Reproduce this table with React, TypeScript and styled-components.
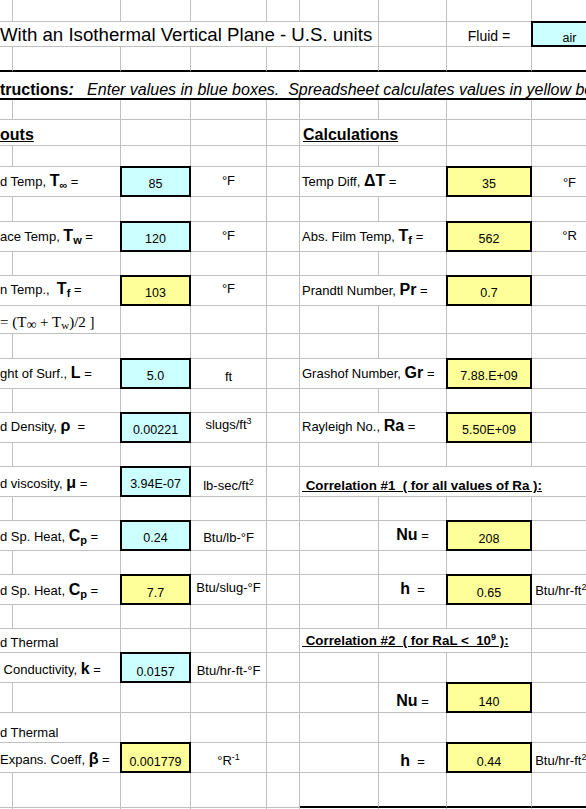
import React from 'react'
import styled, { createGlobalStyle } from 'styled-components'

const GRID = '#c0c0c0'
const colWidths = [13, 108, 70, 76, 33, 79, 68, 85, 76]

type Edge = 'grid' | 'rule'

const GlobalStyle = createGlobalStyle`
    *, *::before, *::after {
        box-sizing: border-box;
    }
    html, body {
        margin: 0;
        padding: 0;
        background: #ffffff;
    }
    body {
        font-family: 'Liberation Sans', Arial, sans-serif;
        color: #000000;
    }
`

const Sheet = styled.div`
    width: 586px;
    height: 809px;
    overflow: hidden;
    display: flex;
    flex-direction: column;
`

const Row = styled.div<{ $h: number }>`
    display: grid;
    grid-template-columns: ${colWidths.map((w) => `${w}px`).join(' ')};
    grid-auto-rows: 100%;
    height: ${(p) => p.$h}px;
    flex: none;
`

const Cell = styled.div<{ $span?: number; $bottom?: Edge; $pb?: number; $pl?: number }>`
    grid-column: span ${(p) => p.$span ?? 1};
    display: flex;
    align-items: flex-end;
    justify-content: flex-start;
    min-width: 0;
    white-space: pre;
    padding: 0 0 ${(p) => p.$pb ?? 0}px ${(p) => p.$pl ?? 0}px;
    border-right: 1px solid ${GRID};
    border-bottom: ${(p) => (p.$bottom === 'rule' ? '2px solid #000' : `1px solid ${GRID}`)};
    font-size: 13px;
    line-height: 18px;
`

/* keeps mixed runs (symbols, sub/superscripts) on one line box */
const Txt = styled.span`
    display: block;
`

const Title = styled(Cell)`
    font-size: 18.67px;
    line-height: 22px;
`

const FluidLabel = styled(Cell)`
    justify-content: center;
    font-size: 14px;
    padding-bottom: 1px;
`

const Instructions = styled(Cell)`
    border-right: none;
    font-size: 16px;
    line-height: 16px;

    b {
        font-weight: 700;
    }
    i {
        font-style: italic;
    }
`

const SectionHead = styled(Cell)`
    font-size: 16px;
    line-height: 16px;
    font-weight: 700;
    text-decoration: underline;
    padding-bottom: 2.5px;
`

const Label = styled(Cell)`
    padding-bottom: ${(p) => p.$pb ?? 5}px;
`

const Formula = styled(Cell)`
    font-family: 'Liberation Serif', 'Times New Roman', serif;
    font-size: 15px;
    padding-bottom: 2px;
`

const ValueBox = styled(Cell)<{ $tone: 'cyan' | 'yellow' }>`
    margin: -1px 0 0 -1px;
    border: 2px solid #000;
    background: ${(p) => (p.$tone === 'cyan' ? '#ccffff' : '#ffff99')};
    justify-content: center;
    font-size: 12.5px;
    line-height: 14px;
    padding-bottom: ${(p) => p.$pb ?? 4}px;
`

const Unit = styled(Cell)`
    justify-content: center;
    padding-bottom: ${(p) => p.$pb ?? 5}px;
`

const CorrHead = styled(Cell)`
    font-size: 13.33px;
    font-weight: 700;
    text-decoration: underline;
    padding-left: 2px;
    padding-bottom: ${(p) => p.$pb ?? 1}px;
`

const Result = styled(Cell)`
    justify-content: center;
    padding-bottom: ${(p) => p.$pb ?? 5}px;
`

const Sym = styled.b`
    font-size: 16px;
    line-height: 1;
    font-weight: 700;
`

const Sub = styled.sub`
    font-size: 11px;
    line-height: 0;
    vertical-align: -3px;
`

const Sup = styled.sup`
    font-size: 9px;
    line-height: 0;
    vertical-align: 5px;
`

const SerifSub = styled.sub<{ $size?: number }>`
    font-size: ${(p) => p.$size ?? 11}px;
    line-height: 0;
    vertical-align: -2px;
`

const Blanks = ({ n }: { n: number }) => (
    <>
        {Array.from({ length: n }).map((_, i) => (
            <Cell key={i} />
        ))}
    </>
)

const BlankRow = ({ h, bottom, ruleFrom }: { h: number; bottom?: Edge; ruleFrom?: number }) => (
    <Row $h={h}>
        {colWidths.map((_, i) => (
            <Cell key={i} $bottom={ruleFrom !== undefined && i >= ruleFrom ? 'rule' : bottom} />
        ))}
    </Row>
)

const App = () => {
    return (
        <>
            <GlobalStyle />
            <Sheet>
                <BlankRow h={22} />
                <Row $h={25}>
                    <Title $span={6}>With an Isothermal Vertical Plane - U.S. units</Title>
                    <Cell />
                    <FluidLabel>Fluid =</FluidLabel>
                    <ValueBox $tone="cyan" $pb={0}>air</ValueBox>
                </Row>
                <BlankRow h={25} bottom="rule" />
                <Row $h={28}>
                    <Instructions $span={9} $bottom="rule">
                        <Txt>
                            <b>tructions<i>:</i></b>
                            <i>{'   Enter values in blue boxes.  Spreadsheet calculates values in yellow boxes.'}</i>
                        </Txt>
                    </Instructions>
                </Row>
                <BlankRow h={20} />
                <Row $h={26}>
                    <SectionHead $span={2}>outs</SectionHead>
                    <Blanks n={3} />
                    <SectionHead $span={2} $pl={3}>Calculations</SectionHead>
                    <Blanks n={2} />
                </Row>
                <BlankRow h={21} />

                <Row $h={30}>
                    <Label $span={2}><Txt>d Temp, <Sym>T<Sub>∞</Sub></Sym> =</Txt></Label>
                    <ValueBox $tone="cyan">85</ValueBox>
                    <Unit $pb={6.5}>°F</Unit>
                    <Cell />
                    <Label $span={2} $pl={2}><Txt>Temp Diff, <Sym>ΔT</Sym> =</Txt></Label>
                    <ValueBox $tone="yellow">35</ValueBox>
                    <Unit $pb={4.5}>°F</Unit>
                </Row>
                <BlankRow h={25} />
                <Row $h={30}>
                    <Label $span={2}><Txt>ace Temp, <Sym>T<Sub>w</Sub></Sym> =</Txt></Label>
                    <ValueBox $tone="cyan">120</ValueBox>
                    <Unit $pb={6.5}>°F</Unit>
                    <Cell />
                    <Label $span={2} $pl={2}><Txt>Abs. Film Temp, <Sym>T<Sub>f</Sub></Sym> =</Txt></Label>
                    <ValueBox $tone="yellow">562</ValueBox>
                    <Unit $pb={6.5}>°R</Unit>
                </Row>
                <BlankRow h={24} />
                <Row $h={30}>
                    <Label $span={2} $pb={6}><Txt>n Temp.,  <Sym>T<Sub>f</Sub></Sym> =</Txt></Label>
                    <ValueBox $tone="yellow">103</ValueBox>
                    <Unit $pb={7}>°F</Unit>
                    <Cell />
                    <Label $span={2} $pl={2}><Txt>Prandtl Number, <Sym>Pr</Sym> =</Txt></Label>
                    <ValueBox $tone="yellow">0.7</ValueBox>
                    <Cell />
                </Row>
                <Row $h={28}>
                    <Formula $span={2}>
                        <Txt>= (T<SerifSub $size={14}>∞</SerifSub> + T<SerifSub>w</SerifSub>)/2 ]</Txt>
                    </Formula>
                    <Blanks n={7} />
                </Row>
                <BlankRow h={25} />
                <Row $h={30}>
                    <Label $span={2}><Txt>ght of Surf., <Sym>L</Sym> =</Txt></Label>
                    <ValueBox $tone="cyan">5.0</ValueBox>
                    <Unit $pb={2.5}>ft</Unit>
                    <Cell />
                    <Label $span={2} $pl={2}><Txt>Grashof Number, <Sym>Gr</Sym> =</Txt></Label>
                    <ValueBox $tone="yellow">7.88.E+09</ValueBox>
                    <Cell />
                </Row>
                <BlankRow h={24} />
                <Row $h={30}>
                    <Label $span={2} $pb={6}><Txt>d Density, <Sym>ρ</Sym>  =</Txt></Label>
                    <ValueBox $tone="cyan">0.00221</ValueBox>
                    <Unit $pb={8.5}><Txt>slugs/ft<Sup>3</Sup></Txt></Unit>
                    <Cell />
                    <Label $span={2} $pl={2} $pb={6}><Txt>Rayleigh No., <Sym>Ra</Sym> =</Txt></Label>
                    <ValueBox $tone="yellow">5.50E+09</ValueBox>
                    <Cell />
                </Row>
                <BlankRow h={24} />
                <Row $h={30}>
                    <Label $span={2} $pb={3}><Txt>d viscosity, <Sym>μ</Sym> =</Txt></Label>
                    <ValueBox $tone="cyan">3.94E-07</ValueBox>
                    <Unit $pb={1.5}><Txt>lb-sec/ft<Sup>2</Sup></Txt></Unit>
                    <Cell />
                    <CorrHead $span={4}> Correlation #1  ( for all values of Ra ):</CorrHead>
                </Row>
                <BlankRow h={24} />
                <Row $h={30}>
                    <Label $span={2} $pb={4.5}><Txt>d Sp. Heat, <Sym>C<Sub>p</Sub></Sym> =</Txt></Label>
                    <ValueBox $tone="cyan">0.24</ValueBox>
                    <Unit $pb={3.5}>Btu/lb-°F</Unit>
                    <Blanks n={2} />
                    <Result $pb={5.5}><Txt><Sym>Nu</Sym> =</Txt></Result>
                    <ValueBox $tone="yellow" $pb={3}>208</ValueBox>
                    <Cell />
                </Row>
                <BlankRow h={24} />
                <Row $h={30}>
                    <Label $span={2} $pb={4.5}><Txt>d Sp. Heat, <Sym>C<Sub>p</Sub></Sym> =</Txt></Label>
                    <ValueBox $tone="yellow" $pb={3.5}>7.7</ValueBox>
                    <Unit $pb={7.5}>Btu/slug-°F</Unit>
                    <Blanks n={2} />
                    <Result $pb={5.5}><Txt><Sym>h</Sym>  =</Txt></Result>
                    <ValueBox $tone="yellow" $pb={3.5}>0.65</ValueBox>
                    <Unit $pb={4.5}><Txt>Btu/hr-ft<Sup>2</Sup>-°F</Txt></Unit>
                </Row>
                <BlankRow h={24} />
                <Row $h={24}>
                    <Label $span={2} $pb={0}>d Thermal</Label>
                    <Blanks n={3} />
                    <CorrHead $span={3} $pb={2}><Txt> Correlation #2  ( for RaL &lt;  10<Sup>9</Sup> ):</Txt></CorrHead>
                    <Cell />
                </Row>
                <Row $h={30}>
                    <Label $span={2} $pb={3.5}><Txt> Conductivity, <Sym>k</Sym> =</Txt></Label>
                    <ValueBox $tone="cyan" $pb={2}>0.0157</ValueBox>
                    <Unit $pb={2.5}>Btu/hr-ft-°F</Unit>
                    <Blanks n={5} />
                </Row>
                <Row $h={30}>
                    <Blanks n={6} />
                    <Result $pb={1}><Txt><Sym>Nu</Sym> =</Txt></Result>
                    <ValueBox $tone="yellow" $pb={2}>140</ValueBox>
                    <Cell />
                </Row>
                <Row $h={30}>
                    <Label $span={2} $pb={0}>d Thermal</Label>
                    <Blanks n={7} />
                </Row>
                <Row $h={30}>
                    <Label $span={2} $pb={3.5}><Txt>Expans. Coeff, <Sym>β</Sym> =</Txt></Label>
                    <ValueBox $tone="yellow" $pb={2}>0.001779</ValueBox>
                    <Unit $pb={2.5}><Txt>°R<Sup>-1</Sup></Txt></Unit>
                    <Blanks n={2} />
                    <Result $pb={1}><Txt><Sym>h</Sym>  =</Txt></Result>
                    <ValueBox $tone="yellow" $pb={2}>0.44</ValueBox>
                    <Unit $pb={2.5}><Txt>Btu/hr-ft<Sup>2</Sup>-°F</Txt></Unit>
                </Row>
                <BlankRow h={35} ruleFrom={5} />
                <BlankRow h={10} />
            </Sheet>
        </>
    )
}

export default App
